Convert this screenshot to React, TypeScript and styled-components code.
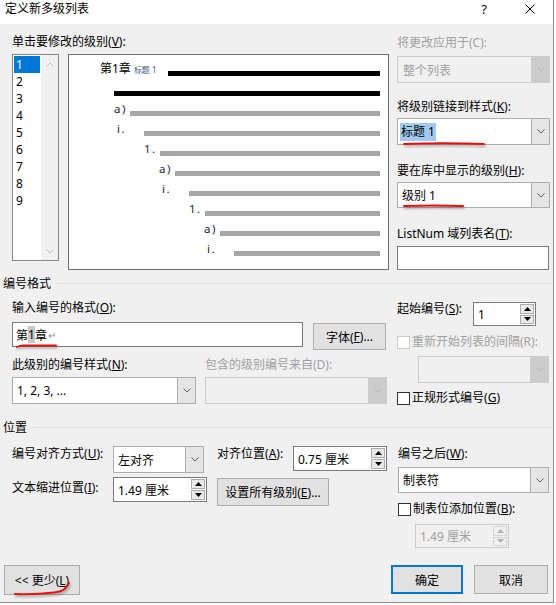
import React from "react";
import styled, { createGlobalStyle } from "styled-components";

const GlobalStyle = createGlobalStyle`
  html, body {
    margin: 0;
    padding: 0;
    background: #ffffff;
  }
  body {
    font-family: "Segoe UI", "Noto Sans", "Noto Sans CJK SC", sans-serif;
    font-size: 12px;
    color: #000000;
  }
`;

const DISABLED = "#a0a0a0";

const Dialog = styled.div`
  width: 554px;
  height: 603px;
  box-sizing: border-box;
  background: #f0f0f0;
  border-right: 1px solid #8c8c8c;
  border-bottom: 1px solid #8c8c8c;
  display: flex;
  flex-direction: column;
  overflow: hidden;
`;

const TitleBar = styled.div`
  height: 24px;
  flex: none;
  background: #ffffff;
  display: flex;
  align-items: center;
  padding-left: 5px;
`;

const TitleText = styled.div`
  flex: 1;
  font-size: 12px;
  line-height: 16px;
  margin-top: -7px;
`;

const CaptionButton = styled.div`
  width: 46px;
  height: 24px;
  display: flex;
  align-items: center;
  justify-content: center;
  font-size: 13px;
  margin-top: -7px;
`;

const Label = styled.div<{ $disabled?: boolean; $w?: number; $mt?: number }>`
  height: 16px;
  line-height: 16px;
  white-space: nowrap;
  color: ${(p) => (p.$disabled ? DISABLED : "#000000")};
  width: ${(p) => (p.$w ? `${p.$w}px` : "auto")};
  margin-top: ${(p) => p.$mt ?? 0}px;
  flex: none;
`;

const Stack = styled.div<{ $w: number; $mt?: number; $ml?: number }>`
  width: ${(p) => p.$w}px;
  margin-top: ${(p) => p.$mt ?? 0}px;
  margin-left: ${(p) => p.$ml ?? 0}px;
  display: flex;
  flex-direction: column;
  flex: none;
`;

const Row = styled.div<{ $mt?: number; $gap?: number; $ml?: number }>`
  display: flex;
  align-items: flex-start;
  margin-top: ${(p) => p.$mt ?? 0}px;
  margin-left: ${(p) => p.$ml ?? 0}px;
  gap: ${(p) => p.$gap ?? 0}px;
`;

/* ---------- top area ---------- */

const TopSection = styled.div`
  display: flex;
  gap: 8px;
  padding-left: 12px;
  margin-top: 10px;
`;

const LevelList = styled.div`
  width: 47px;
  height: 207px;
  box-sizing: border-box;
  border: 1px solid #828790;
  background: #ffffff;
  display: flex;
`;

const LevelItems = styled.div`
  width: 28px;
  padding: 1px 0 0 1px;
  box-sizing: border-box;
`;

const LevelItem = styled.div<{ $selected?: boolean }>`
  width: 26px;
  height: 17px;
  line-height: 17px;
  padding-left: 2px;
  box-sizing: border-box;
  font-size: 12px;
  background: ${(p) => (p.$selected ? "#0078d7" : "transparent")};
  color: ${(p) => (p.$selected ? "#ffffff" : "#000000")};
`;

const ScrollTrack = styled.div`
  flex: 1;
  background: #f0f0f0;
  display: flex;
  flex-direction: column;
  justify-content: space-between;
  align-items: center;
  padding: 7px 0 6px;
`;

const Preview = styled.div`
  width: 321px;
  height: 216px;
  box-sizing: border-box;
  border: 1px solid #6e6e6e;
  background: #ffffff;
  padding: 6px 8px 0 0;
`;

const PreviewRow = styled.div<{ $indent: number }>`
  height: 20px;
  display: flex;
  padding-left: ${(p) => p.$indent}px;
`;

const PreviewLabel = styled.div<{ $w: number }>`
  width: ${(p) => p.$w}px;
  flex: none;
  line-height: 16px;
  white-space: nowrap;
  font-size: 11.5px;
  color: #1c1c40;
  letter-spacing: 1.5px;
`;

const HeadLabel = styled.span`
  font-size: 12px;
  color: #000000;
  letter-spacing: 0;
`;

const HeadStyle = styled.span`
  font-size: 8px;
  color: #3e5a86;
  letter-spacing: 0;
  margin-left: 3px;
`;

const Bar = styled.div<{ $dark?: boolean }>`
  flex: 1;
  height: 5px;
  margin-top: 10px;
  background: ${(p) => (p.$dark ? "#000000" : "#a6a6a6")};
`;

/* ---------- controls ---------- */

const Frame = styled.div<{ $w: number; $h: number; $disabled?: boolean; $mt?: number; $ml?: number; $strong?: boolean }>`
  position: relative;
  width: ${(p) => p.$w}px;
  height: ${(p) => p.$h}px;
  margin-top: ${(p) => p.$mt ?? 0}px;
  margin-left: ${(p) => p.$ml ?? 0}px;
  box-sizing: border-box;
  border: 1px solid ${(p) => (p.$disabled ? "#cccccc" : p.$strong ? "#7a7a7a" : "#adadad")};
  background: ${(p) => (p.$disabled ? "#f0f0f0" : "#ffffff")};
  display: flex;
  align-items: stretch;
  flex: none;
`;

const FieldText = styled.div<{ $disabled?: boolean; $pad?: number }>`
  flex: 1;
  display: flex;
  align-items: center;
  padding-left: ${(p) => p.$pad ?? 4}px;
  white-space: nowrap;
  color: ${(p) => (p.$disabled ? DISABLED : "#000000")};
  overflow: hidden;
`;

const DropButton = styled.div<{ $disabled?: boolean }>`
  width: 17px;
  flex: none;
  border-left: 1px solid ${(p) => (p.$disabled ? "#cccccc" : "#adadad")};
  background: ${(p) => (p.$disabled ? "#cccccc" : "#e5e5e5")};
  display: flex;
  align-items: center;
  justify-content: center;
`;

const SpinColumn = styled.div`
  width: 15px;
  flex: none;
  display: flex;
  flex-direction: column;
  gap: 1px;
  padding: 1px 1px 1px 0;
  box-sizing: border-box;
`;

const SpinButton = styled.div<{ $disabled?: boolean }>`
  flex: 1;
  border: 1px solid ${(p) => (p.$disabled ? "#d6d6d6" : "#adadad")};
  background: ${(p) => (p.$disabled ? "#f0f0f0" : "#e9e9e9")};
  display: flex;
  align-items: center;
  justify-content: center;
`;

const Selected = styled.span`
  background: #9fcbf1;
  line-height: 18px;
  padding: 0 1px;
`;

const Caret = styled.span`
  background: #c8c8c8;
`;

const ReturnMark = styled.span`
  color: #8a8a8a;
  font-size: 10px;
  margin-left: 1px;
`;

const PushButton = styled.div<{ $w: number; $h: number; $primary?: boolean; $mt?: number }>`
  position: relative;
  width: ${(p) => p.$w}px;
  height: ${(p) => p.$h}px;
  margin-top: ${(p) => p.$mt ?? 0}px;
  box-sizing: border-box;
  border: ${(p) => (p.$primary ? "2px solid #0078d7" : "1px solid #adadad")};
  background: #e1e1e1;
  display: flex;
  align-items: center;
  justify-content: center;
  white-space: nowrap;
  flex: none;
`;

const CheckRow = styled.div<{ $mt?: number }>`
  display: flex;
  align-items: center;
  gap: 2px;
  height: 16px;
  margin-top: ${(p) => p.$mt ?? 0}px;
`;

const CheckBox = styled.div<{ $disabled?: boolean }>`
  width: 13px;
  height: 13px;
  box-sizing: border-box;
  border: 1px solid ${(p) => (p.$disabled ? "#cccccc" : "#333333")};
  background: #ffffff;
  flex: none;
`;

const SectionHeader = styled.div<{ $mt: number }>`
  display: flex;
  align-items: center;
  height: 16px;
  margin: ${(p) => p.$mt}px 0 0 3px;
`;

const HeaderRule = styled.div`
  flex: 1;
  height: 1px;
  background: #dcdcdc;
  margin-left: 6px;
`;

const SectionBody = styled.div`
  display: flex;
  padding-left: 12px;
`;

const ButtonBar = styled.div`
  display: flex;
  align-items: flex-start;
  padding: 0 5px 0 4px;
  margin-top: 17px;
`;

const Spacer = styled.div`
  flex: 1;
`;

const Mark = styled.svg<{ $l: number; $t: number }>`
  position: absolute;
  left: ${(p) => p.$l}px;
  top: ${(p) => p.$t}px;
  overflow: visible;
  pointer-events: none;
  filter: drop-shadow(1px 2px 1px rgba(0, 0, 0, 0.3));
`;

/* ---------- small drawings ---------- */

const Chevron = ({ up, color }: { up?: boolean; color: string }) => (
  <svg width="8" height="5" viewBox="0 0 8 5">
    <path
      d={up ? "M0.5 4.5 L4 1 L7.5 4.5" : "M0.5 0.5 L4 4 L7.5 0.5"}
      fill="none"
      stroke={color}
      strokeWidth="1"
    />
  </svg>
);

const Arrow = ({ up, color }: { up?: boolean; color: string }) => (
  <svg width="7" height="4" viewBox="0 0 7 4">
    <path d={up ? "M0 4 L3.5 0 L7 4 Z" : "M0 0 L3.5 4 L7 0 Z"} fill={color} />
  </svg>
);

const RedLine = ({ l, t, d, w, h }: { l: number; t: number; d: string; w: number; h: number }) => (
  <Mark $l={l} $t={t} width={w} height={h}>
    <path d={d} fill="none" stroke="#e8100a" strokeWidth="2" strokeLinecap="round" />
  </Mark>
);

/* ---------- composed controls ---------- */

type ComboProps = {
  w: number;
  h?: number;
  value?: React.ReactNode;
  disabled?: boolean;
  mt?: number;
  ml?: number;
  pad?: number;
  children?: React.ReactNode;
};

const ComboBox = ({ w, h = 27, value, disabled, mt, ml, pad, children }: ComboProps) => (
  <Frame $w={w} $h={h} $disabled={disabled} $mt={mt} $ml={ml}>
    <FieldText $disabled={disabled} $pad={pad}>
      {value}
    </FieldText>
    <DropButton $disabled={disabled}>
      <Chevron color={disabled ? "#b4b4b4" : "#606060"} />
    </DropButton>
    {children}
  </Frame>
);

const SpinBox = ({ w, h = 25, value, disabled, mt, ml }: ComboProps) => (
  <Frame $w={w} $h={h} $disabled={disabled} $mt={mt} $ml={ml} $strong>
    <FieldText $disabled={disabled}>{value}</FieldText>
    <SpinColumn>
      <SpinButton $disabled={disabled}>
        <Arrow up color={disabled ? "#b0b0b0" : "#000000"} />
      </SpinButton>
      <SpinButton $disabled={disabled}>
        <Arrow color={disabled ? "#b0b0b0" : "#000000"} />
      </SpinButton>
    </SpinColumn>
  </Frame>
);

const Key = ({ k }: { k: string }) => (
  <>
    (<u>{k}</u>)
  </>
);

const previewRows = [
  { indent: 31, w: 68, label: "head", dark: true },
  { indent: 45, w: 0, label: "", dark: true },
  { indent: 45, w: 16, label: "a)" },
  { indent: 48, w: 27, label: "i." },
  { indent: 75, w: 16, label: "1." },
  { indent: 90, w: 16, label: "a)" },
  { indent: 93, w: 27, label: "i." },
  { indent: 120, w: 16, label: "1." },
  { indent: 135, w: 16, label: "a)" },
  { indent: 138, w: 27, label: "i." },
];

const levels = [1, 2, 3, 4, 5, 6, 7, 8, 9];

export default function App() {
  return (
    <>
      <GlobalStyle />
      <Dialog>
        <TitleBar>
          <TitleText>定义新多级列表</TitleText>
          <CaptionButton>?</CaptionButton>
          <CaptionButton>
            <svg width="10" height="10" viewBox="0 0 10 10">
              <path d="M0.5 0.5 L9.5 9.5 M9.5 0.5 L0.5 9.5" stroke="#000" strokeWidth="1" />
            </svg>
          </CaptionButton>
        </TitleBar>

        <TopSection>
          <Stack $w={377}>
            <Label>
              单击要修改的级别<Key k="V" />:
            </Label>
            <Row $mt={4} $gap={9}>
              <LevelList>
                <LevelItems>
                  {levels.map((n) => (
                    <LevelItem key={n} $selected={n === 1}>
                      {n}
                    </LevelItem>
                  ))}
                </LevelItems>
                <ScrollTrack>
                  <Chevron up color="#c2c2c2" />
                  <Chevron color="#c2c2c2" />
                </ScrollTrack>
              </LevelList>
              <Preview>
                {previewRows.map((r, i) => (
                  <PreviewRow key={i} $indent={r.indent}>
                    <PreviewLabel $w={r.w}>
                      {r.label === "head" ? (
                        <>
                          <HeadLabel>第1章</HeadLabel>
                          <HeadStyle>标题 1</HeadStyle>
                        </>
                      ) : (
                        r.label
                      )}
                    </PreviewLabel>
                    <Bar $dark={r.dark} />
                  </PreviewRow>
                ))}
              </Preview>
            </Row>
          </Stack>

          <Stack $w={153} $mt={1}>
            <Label $disabled>将更改应用于(C):</Label>
            <ComboBox w={153} mt={5} value="整个列表" disabled pad={5} />
            <Label $mt={16}>
              将级别链接到样式<Key k="K" />:
            </Label>
            <ComboBox w={153} mt={3} pad={2} value={<Selected>标题 1</Selected>}>
              <RedLine l={5} t={23} w={82} h={4} d="M1 2 Q 40 0.5 81 2" />
            </ComboBox>
            <Label $mt={18}>
              要在库中显示的级别<Key k="H" />:
            </Label>
            <ComboBox w={153} h={26} mt={3} value="级别 1">
              <RedLine l={5} t={21} w={61} h={4} d="M1 2 Q 30 1 60 2" />
            </ComboBox>
            <Label $mt={18}>
              ListNum 域列表名<Key k="T" />:
            </Label>
            <Frame $w={152} $h={24} $mt={4} $strong />
          </Stack>
        </TopSection>

        <SectionHeader $mt={5}>
          编号格式
          <HeaderRule />
        </SectionHeader>
        <SectionBody>
          <Stack $w={375}>
            <Label $mt={9}>
              输入编号的格式<Key k="O" />:
            </Label>
            <Row $mt={6} $gap={10}>
              <Frame $w={291} $h={25} $strong>
                <FieldText $pad={3}>
                  第<Caret>1</Caret>章<ReturnMark>↵</ReturnMark>
                </FieldText>
                <RedLine l={3} t={21} w={41} h={4} d="M1 3 Q 4 1 10 1.5 L 40 1.5" />
              </Frame>
              <PushButton $w={73} $h={27} $mt={1}>
                字体<Key k="F" />...
              </PushButton>
            </Row>
            <Row $mt={7}>
              <Label $w={193}>
                此级别的编号样式<Key k="N" />:
              </Label>
              <Label $disabled>包含的级别编号来自(D):</Label>
            </Row>
            <Row $mt={4} $gap={9}>
              <ComboBox w={184} value="1, 2, 3, ..." />
              <ComboBox w={182} disabled />
            </Row>
          </Stack>

          <Stack $w={153} $ml={10}>
            <Row $mt={10}>
              <Label $w={76}>
                起始编号<Key k="S" />:
              </Label>
              <SpinBox w={63} h={24} mt={1} value="1" />
            </Row>
            <CheckRow $mt={8}>
              <CheckBox $disabled />
              <Label $disabled>重新开始列表的间隔(R):</Label>
            </CheckRow>
            <ComboBox w={131} ml={21} mt={6} disabled />
            <CheckRow $mt={7}>
              <CheckBox />
              <Label>
                正规形式编号<Key k="G" />
              </Label>
            </CheckRow>
          </Stack>
        </SectionBody>

        <SectionHeader $mt={13}>
          位置
          <HeaderRule />
        </SectionHeader>
        <SectionBody>
          <Stack $w={376}>
            <Row $mt={11}>
              <Label $w={101}>
                编号对齐方式<Key k="U" />:
              </Label>
              <ComboBox w={91} h={27} value="左对齐" />
              <Label $w={76} style={{ marginLeft: 13 }}>
                对齐位置<Key k="A" />:
              </Label>
              <SpinBox w={94} value="0.75 厘米" />
            </Row>
            <Row $mt={4}>
              <Label $w={101} $mt={3}>
                文本缩进位置<Key k="I" />:
              </Label>
              <SpinBox w={94} value="1.49 厘米" />
              <Stack $w={112} $ml={10}>
                <PushButton $w={112} $h={28} $mt={1}>
                  设置所有级别<Key k="E" />...
                </PushButton>
              </Stack>
            </Row>
          </Stack>
          <Stack $w={152} $ml={10}>
            <Label $mt={11}>
              编号之后<Key k="W" />:
            </Label>
            <ComboBox w={151} h={26} mt={5} value="制表符" />
            <CheckRow $mt={8}>
              <CheckBox />
              <Label>
                制表位添加位置<Key k="B" />:
              </Label>
            </CheckRow>
            <SpinBox w={94} h={24} ml={17} mt={7} value="1.49 厘米" disabled />
          </Stack>
        </SectionBody>

        <ButtonBar>
          <PushButton $w={76} $h={30}>
            &lt;&lt; 更少<Key k="L" />
            <RedLine l={9} t={16} w={56} h={13} d="M1 12 C 14 12.5, 28 12, 40 10.5 S 52 5, 55 1" />
          </PushButton>
          <Spacer />
          <PushButton $w={72} $h={29} $primary>
            确定
          </PushButton>
          <PushButton $w={74} $h={29} style={{ marginLeft: 11 }}>
            取消
          </PushButton>
        </ButtonBar>
      </Dialog>
    </>
  );
}
